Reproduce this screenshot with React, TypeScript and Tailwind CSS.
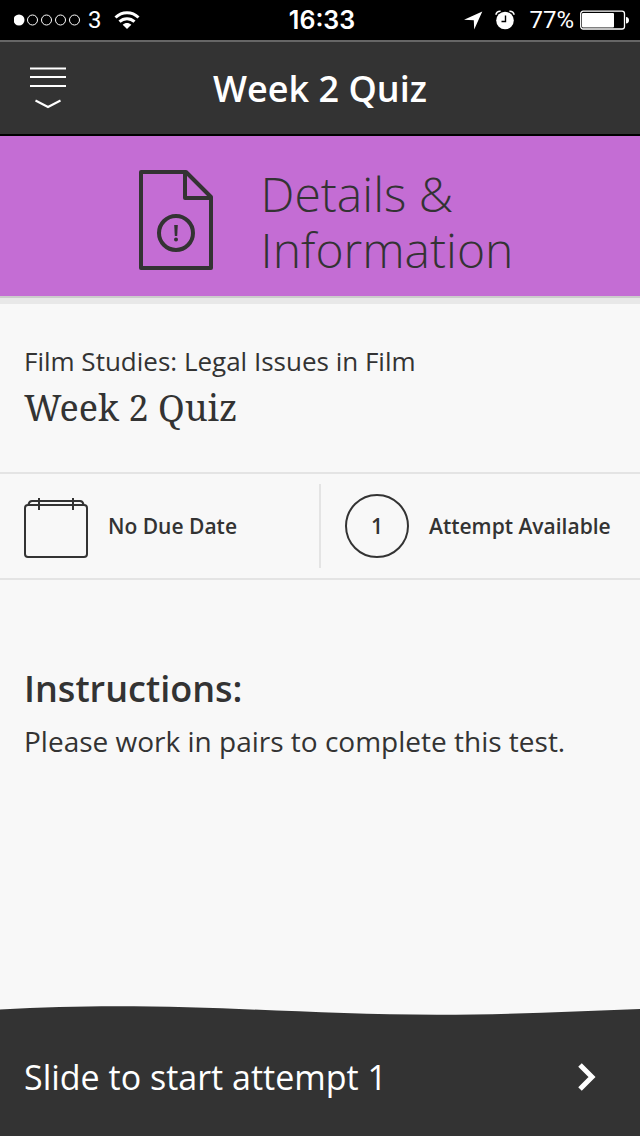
import type { ReactNode } from 'react'

interface QuizInfo {
  course: string
  title: string
  dueDate: string
  attempts: number
  instructions: string
}

const quiz: QuizInfo = {
  course: 'Film Studies: Legal Issues in Film',
  title: 'Week 2 Quiz',
  dueDate: 'No Due Date',
  attempts: 1,
  instructions: 'Please work in pairs to complete this test.',
}

function SignalDots() {
  return (
    <svg width="68" height="12" viewBox="0 0 68 12" fill="none" stroke="white" strokeWidth="1">
      <circle cx="5" cy="6" r="5.5" fill="white" stroke="none" />
      <circle cx="18.500" cy="6" r="5" />
      <circle cx="32.500" cy="6" r="5" />
      <circle cx="46.500" cy="6" r="5" />
      <circle cx="60.500" cy="6" r="5" />
    </svg>
  )
}

function WifiIcon() {
  return (
    <svg width="26" height="18" viewBox="0 0 26 18" fill="none" stroke="white" strokeWidth="3">
      <path d="M1.500 6.500C8 .2 18 .2 24.500 6.500" />
      <path d="M5.500 10.700C9.800 6.700 16.200 6.700 20.500 10.700" />
      <path d="M13 18l-4.300-4.300c2.400-2.300 6.200-2.300 8.600 0z" fill="white" stroke="none" />
    </svg>
  )
}

function LocationIcon() {
  return (
    <svg width="20" height="20" viewBox="0 0 20 20" fill="white">
      <path d="M19.300 1.500L1 9.800l9.800.4.400 9.300z" />
    </svg>
  )
}

function AlarmIcon() {
  return (
    <svg width="20" height="20" viewBox="0 0 20 20" fill="none">
      <circle cx="10" cy="10.500" r="8.800" fill="white" />
      <path d="M1 4.800C1 2.500 3 1 5.600 1.200M19 4.800C19 2.500 17 1 14.400 1.200" stroke="white" strokeWidth="1.600" />
      <path d="M10.500 5.500v6H6.500" stroke="black" strokeWidth="1.400" />
    </svg>
  )
}

function BatteryIcon() {
  return (
    <svg width="50" height="20" viewBox="0 0 50 20" fill="none">
      <rect x=".7" y="1.200" width="43.800" height="17.800" rx="2.500" stroke="white" strokeWidth="1.300" />
      <rect x="2" y="3" width="32" height="14.500" rx="1" fill="white" />
      <path d="M46 7c4 0 4 6.500 0 6.500z" fill="white" />
    </svg>
  )
}

function MenuIcon() {
  return (
    <svg width="36" height="42" viewBox="0 0 36 42" fill="none" stroke="white" strokeWidth="2">
      <path d="M0 1.500h36M0 10h36M0 19h36" />
      <path d="M5.500 33.500L18 40 30.500 33.500" />
    </svg>
  )
}

function DocumentAlertIcon() {
  return (
    <svg width="74" height="100" viewBox="0 0 74 100" fill="none" stroke="#333" strokeWidth="4" strokeLinejoin="round">
      <path d="M2 2h45l25 25v71H2z" />
      <path d="M46 2v26h26" />
      <circle cx="37" cy="63" r="17" />
      <path d="M35.200 55h3.600l-.6 11h-2.400z" fill="#333" stroke="none" />
      <circle cx="37" cy="69.500" r="2" fill="#333" stroke="none" />
    </svg>
  )
}

function CalendarIcon() {
  return (
    <svg width="64" height="64" viewBox="0 0 64 64" fill="none" stroke="#333" strokeWidth="2">
      <rect x="1" y="11" width="62" height="52" rx="3" />
      <path d="M4.500 10.500C5 8 6 7 8 7h48c2 0 3 1 3.500 3.500" />
      <path d="M15 4v12M49 4v12" />
    </svg>
  )
}

function StatusBar() {
  return (
    <div className="grid h-10 grid-cols-[1fr_auto_1fr] items-center bg-black pr-2.5 pl-3.5 font-[Roboto,sans-serif] text-[24px] leading-10 text-white">
      <div className="flex items-center">
        <SignalDots />
        <span className="mr-3 ml-1.5">3</span>
        <WifiIcon />
      </div>
      <time className="font-[Inter,sans-serif] text-[25px] font-semibold">16:33</time>
      <div className="flex items-center justify-end">
        <LocationIcon />
        <span className="mr-3.5 ml-3">
          <AlarmIcon />
        </span>
        <span className="mr-1.5">77%</span>
        <BatteryIcon />
      </div>
    </div>
  )
}

function InfoCell({ icon, children }: { icon: ReactNode; children: ReactNode }) {
  return (
    <div className="flex items-center gap-5 pl-6 text-[21px] leading-8 font-semibold whitespace-nowrap">
      {icon}
      <span>{children}</span>
    </div>
  )
}

export default function App() {
  return (
    <div className="flex min-h-screen flex-col bg-[#f8f8f8] font-['Open_Sans',sans-serif] text-[#333]">
      <StatusBar />

      <header className="grid h-24 grid-cols-[1fr_auto_1fr] items-center border-t-2 border-b-2 border-t-[#666] border-b-black bg-[#333] px-[30px] text-white">
        <button type="button" aria-label="Menu" className="justify-self-start">
          <MenuIcon />
        </button>
        <h1 className="pt-0.5 text-[36px] leading-12 font-semibold">{quiz.title}</h1>
      </header>

      <section className="flex h-[162px] items-center justify-center gap-12 border-b-2 border-[#ccc] bg-[#c46dd4] pt-3 pl-3">
        <div className="mb-1">
          <DocumentAlertIcon />
        </div>
        <h2 className="text-[48px] leading-14 font-light">
          Details &amp;
          <br />
          Information
        </h2>
      </section>
      <div className="h-1.5 bg-[#e8e8e8]" />

      <main className="flex-1">
        <div className="px-6 pt-10 pb-[38px]">
          <p className="text-[26px] leading-[34px]">{quiz.course}</p>
          <h2 className="mt-1 font-['Noto_Serif','Droid_Serif','DejaVu_Serif',serif] text-[36px] leading-[52px]">{quiz.title}</h2>
        </div>

        <div className="grid h-[108px] grid-cols-2 items-center border-y-2 border-[#e4e4e4]">
          <InfoCell icon={<CalendarIcon />}>{quiz.dueDate}</InfoCell>
          <div className="-ml-px border-l-2 border-[#e4e4e4] py-2.5">
            <InfoCell
              icon={
                <span className="flex size-16 items-center justify-center rounded-full border-2 border-[#333]">
                  {quiz.attempts}
                </span>
              }
            >
              Attempt Available
            </InfoCell>
          </div>
        </div>

        <div className="px-6 pt-[85px]">
          <h3 className="text-[36px] leading-12 font-semibold">Instructions:</h3>
          <p className="mt-2 text-[28px] leading-10">{quiz.instructions}</p>
        </div>
      </main>

      <footer>
        <svg className="block h-3 w-full" viewBox="0 0 640 12" preserveAspectRatio="none" fill="#333">
          <path d="M0 3.500C40 1.200 80 .3 115 .3C230 .3 325 8.800 437 8.800C510 8.800 575 5.500 640 3V12H0z" />
        </svg>
        <button
          type="button"
          className="flex h-[118px] w-full items-center justify-between bg-[#333] pr-11 pl-6 text-[34px] leading-12 text-white"
        >
          Slide to start attempt {quiz.attempts}
          <svg width="18" height="28" viewBox="0 0 18 28" fill="none" stroke="white" strokeWidth="5">
            <path d="M2 2l12 12L2 26" />
          </svg>
        </button>
      </footer>
    </div>
  )
}
